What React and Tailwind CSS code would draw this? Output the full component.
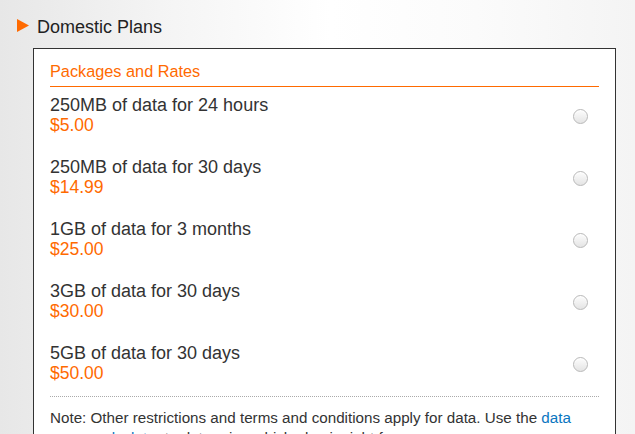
const plans = [
  { name: "250MB of data for 24 hours", price: "$5.00" },
  { name: "250MB of data for 30 days", price: "$14.99" },
  { name: "1GB of data for 3 months", price: "$25.00" },
  { name: "3GB of data for 30 days", price: "$30.00" },
  { name: "5GB of data for 30 days", price: "$50.00" },
];

function Radio() {
  return (
    <span className="block w-[15px] h-[15px] rounded-full border border-[#b9b9b9] bg-gradient-to-b from-[#fdfdfd] to-[#e4e4e4] shadow-[inset_0_1px_1px_rgba(255,255,255,0.9)]" />
  );
}

export default function App() {
  return (
    <div
      className="w-[635px] h-[434px] overflow-hidden bg-[linear-gradient(to_right,#e7e7e7_0%,#f4f4f4_25%,#ffffff_52%,#fbfbfb_75%,#f4f4f4_100%)] text-[#333] pt-[17px]"
      style={{ fontFamily: '"Liberation Sans", Arial, Helvetica, sans-serif' }}
    >
      <div className="flex items-center pl-[17px] h-[20px]">
        <svg width="12" height="13" viewBox="0 0 12 13" className="mr-[8px] -mt-[4px]">
          <polygon points="0,0 12,6.5 0,13" fill="#ff6a00" />
        </svg>
        <span className="text-[18px] leading-[20px] text-[#222]">Domestic Plans</span>
      </div>

      <div className="ml-[33px] mt-[11px] w-[583px] border border-[#333] bg-white pl-[16px] pr-[16px] pt-[12px]">
        <div className="text-[16.3px] leading-[20px] text-[#ff6a00] pb-[5px] border-b border-[#ff6a00]">
          Packages and Rates
        </div>

        <div className="pt-[8px] flex flex-col gap-[22px]">
          {plans.map((p) => (
            <div key={p.name} className="flex items-center justify-between">
              <div>
                <div className="text-[18px] leading-[20px] text-[#333]">{p.name}</div>
                <div className="text-[17.5px] leading-[20px] text-[#ff6a00]">{p.price}</div>
              </div>
              <div className="mr-[11px] mt-[2px]">
                <Radio />
              </div>
            </div>
          ))}
        </div>

        <div className="mt-[13px] border-t border-dotted border-[#aaa]" />

        <p className="pt-[11px] text-[15.2px] leading-[20px] text-[#333]">
          Note: Other restrictions and terms and conditions apply for data. Use the{" "}
          <a className="text-[#0a76c0]">data usage calculator</a> to determine which plan is right for you.
        </p>
      </div>
    </div>
  );
}
